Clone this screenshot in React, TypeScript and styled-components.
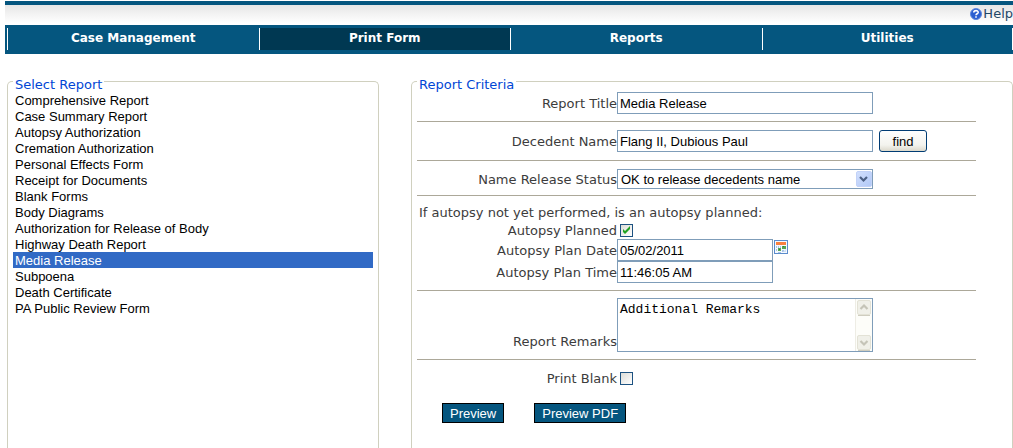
import React, { useState } from "react";
import styled, { createGlobalStyle } from "styled-components";

const verdana = `Verdana, "DejaVu Sans", sans-serif`;
const arial = `"Liberation Sans", Arial, sans-serif`;

const GlobalStyle = createGlobalStyle`
  *, *::before, *::after { box-sizing: border-box; }
  body { margin: 0; background: #fff; color: #3c3c3c; font: 13px/16px ${verdana}; }
`;

const Page = styled.div`
  display: flex;
  flex-direction: column;
  min-height: 100vh;
  padding: 1px 0 0 5px;
`;

const TopBar = styled.header`
  display: flex;
  justify-content: flex-end;
  align-items: center;
  height: 24px;
  border-top: 4px solid #05567f;
  background: linear-gradient(#e6e6e6, #fff 90%);
`;

const HelpLink = styled.a`
  display: flex;
  align-items: center;
  gap: 1px;
  height: 20px;
  padding-bottom: 2px;
  color: #1f4766;
  text-decoration: none;
`;

const Nav = styled.nav`
  display: grid;
  grid-template-columns: repeat(4, 1fr);
  padding: 3px 0 4px 2px;
  background: #05567f;
`;

const NavItem = styled.a<{ $active?: boolean }>`
  height: 22px;
  border-left: 1px solid #fff;
  background: ${(p) => (p.$active ? "#003852" : "transparent")};
  color: #fff;
  font-size: 12px;
  line-height: 20px;
  font-weight: bold;
  text-align: center;
  text-decoration: none;
  &:last-child { border-right: 1px solid #fff; }
`;

const Main = styled.main`
  display: grid;
  grid-template-columns: 372fr 602fr;
  gap: 32px;
  flex: 1;
  padding: 16px 0 0 2px;
`;

const Panel = styled.fieldset`
  min-width: 0;
  margin: 0;
  padding: 0 5px 16px;
  border: 1px solid #d0d0bf;
  border-bottom: 0;
  border-radius: 5px 5px 0 0;
`;

const PanelTitle = styled.legend`
  padding: 8px 2px 0;
  color: #0046d5;
  line-height: 14px;
`;

const ReportList = styled.select`
  display: block;
  width: 100%;
  padding: 0;
  border: 0;
  outline: 0;
  overflow: hidden;
  background: #fff;
  color: #000;
  font: 13px/16px ${arial};
  option {
    height: 16px;
    min-height: 16px;
    padding: 1px 2px 0;
  }
  option:checked {
    background: #316ac5 linear-gradient(#316ac5, #316ac5);
    color: #fff;
  }
`;

const Form = styled.form`
  padding-right: 31px;
`;

const Group = styled.div<{ $top?: number; $bottom?: number }>`
  padding: ${(p) => p.$top ?? 8}px 0 ${(p) => p.$bottom ?? 7}px;
  border-bottom: 1px solid #aca899;
`;

const LastGroup = styled.div`
  padding-top: 9px;
`;

const Row = styled.div<{ $end?: boolean }>`
  display: grid;
  grid-template-columns: 200px 1fr;
  align-items: ${(p) => (p.$end ? "end" : "center")};
`;

const Label = styled.label<{ $tall?: boolean }>`
  padding-top: 2px;
  text-align: right;
  white-space: nowrap;
  line-height: ${(p) => (p.$tall ? 20 : 16)}px;
`;

const Field = styled.div`
  display: flex;
  align-items: center;
`;

const Question = styled.p`
  margin: 0;
  padding-left: 2px;
  line-height: 17px;
`;

const TextInput = styled.input<{ $short?: boolean }>`
  width: ${(p) => (p.$short ? 156 : 256)}px;
  height: 22px;
  padding: 0 2px;
  border: 1px solid #7f9db9;
  background: #fff;
  color: #000;
  font: 13px/16px ${arial};
`;

const FindButton = styled.button`
  width: 48px;
  height: 22px;
  margin-left: 6px;
  padding: 1px 0 0;
  border: 1px solid #003c74;
  border-radius: 3px;
  background: linear-gradient(#fff, #f3f3ee 70%, #dcd9cc);
  color: #000;
  font: 13px/16px ${arial};
`;

const SelectWrap = styled.div`
  display: grid;
  width: 256px;
  > * { grid-area: 1 / 1; }
  > svg { justify-self: end; align-self: center; margin-right: 1px; pointer-events: none; }
`;

const StatusSelect = styled.select`
  appearance: none;
  height: 20px;
  padding: 2px 20px 0 3px;
  border: 1px solid #7f9db9;
  border-radius: 0;
  background: #fff;
  color: #000;
  font: 13px/16px ${arial};
`;

const TickBox = styled.input`
  appearance: none;
  width: 13px;
  height: 13px;
  margin: 0 0 0 3px;
  border: 1px solid #1d5281;
  background: linear-gradient(135deg, #dcdcd7, #fff);
`;

const TickWrap = styled.span`
  display: inline-grid;
  > * { grid-area: 1 / 1; }
  > svg { margin-left: 3px; pointer-events: none; }
`;

const CalendarButton = styled.button`
  display: flex;
  align-self: flex-start;
  margin: 1px 0 0 1px;
  padding: 0;
  border: 0;
  background: none;
`;

const RemarksBox = styled.div`
  display: flex;
  width: 256px;
  height: 54px;
  border: 1px solid #7f9db9;
`;

const Remarks = styled.textarea`
  flex: 1;
  min-width: 0;
  padding: 3px 2px 0;
  border: 0;
  outline: 0;
  resize: none;
  overflow: hidden;
  background: #fff;
  color: #000;
  font: 13px/16px "Liberation Mono", "Courier New", monospace;
`;

const ScrollTrack = styled.div`
  display: flex;
  flex-direction: column;
  justify-content: space-between;
  width: 17px;
  background: #fdfdf9;
  border-left: 1px solid #eeede5;
`;

const Actions = styled.div`
  display: flex;
  gap: 30px;
  padding: 16px 0 0 25px;
`;

const ActionButton = styled.button`
  height: 20px;
  padding: 1px 7px 0;
  border: 1px solid #000;
  background: #05567f;
  color: #fff;
  font: 13px/16px ${arial};
`;

const HelpIcon = () => (
  <svg width="12" height="12" viewBox="0 0 12 12" aria-hidden="true">
    <circle cx="6" cy="6" r="5.5" fill="#2a5fd0" stroke="#5c88de" />
    <path d="M3.8 4.6C3.8 2 8.4 2 8.2 4.4C8 5.8 6 5.7 6 7.2M6 8.2V9.8" fill="none" stroke="#fff" strokeWidth="1.6" />
  </svg>
);

const DropArrow = () => (
  <svg width="16" height="16" viewBox="0 0 16 16" aria-hidden="true">
    <defs>
      <linearGradient id="drop" x1="0" y1="0" x2="1" y2="1">
        <stop offset="0" stopColor="#d3e0fd" />
        <stop offset="1" stopColor="#b0c8f7" />
      </linearGradient>
    </defs>
    <rect x="0.5" y="0.5" width="15" height="15" rx="1.5" fill="url(#drop)" stroke="#c2d2f8" />
    <path d="M4 6L7.5 9.5L11 6" fill="none" stroke="#4d6185" strokeWidth="2.2" />
  </svg>
);

const Tick = () => (
  <svg width="13" height="13" viewBox="0 0 13 13" aria-hidden="true">
    <path d="M3 5V8L5 10L10 5V2L5 7Z" fill="#21a121" />
  </svg>
);

const CalendarIcon = () => (
  <svg width="14" height="14" viewBox="0 0 14 14" aria-hidden="true">
    <rect x="0.5" y="0.5" width="13" height="13" fill="#f4f9ff" stroke="#5b8ccc" />
    <path d="M2 2H12V5H2Z" fill="#f9803f" />
    <path d="M2 6H3V8H2ZM4 6H5V8H4ZM6 6H7V8H6ZM2 9H3V11H2ZM8 10H10V12H8ZM4 12H7V13H4Z" fill="#a9c3e6" />
    <path d="M8 6H12V9H8ZM4 8H7V11H4Z" fill="#58a552" />
    <path d="M9 6H10V7H9ZM5 9H6V10H5Z" fill="#2f8531" />
    <path d="M9 12L12 9V12Z" fill="#cfe0f5" />
  </svg>
);

const ScrollArrow = ({ down }: { down?: boolean }) => (
  <svg width="16" height="17" viewBox="0 0 16 17" aria-hidden="true">
    <rect x="1.5" y="1.5" width="13" height="14" rx="1.5" fill="#f0f0e9" stroke="#e3e2d6" />
    <path d="M2 16.5H14" stroke="#cfcdbf" />
    <path d={down ? "M4.5 7L8 10.5L11.5 7" : "M4.5 10L8 6.5L11.5 10"} fill="none" stroke="#c5c4b8" strokeWidth="2.2" />
  </svg>
);

const reports = [
  "Comprehensive Report",
  "Case Summary Report",
  "Autopsy Authorization",
  "Cremation Authorization",
  "Personal Effects Form",
  "Receipt for Documents",
  "Blank Forms",
  "Body Diagrams",
  "Authorization for Release of Body",
  "Highway Death Report",
  "Media Release",
  "Subpoena",
  "Death Certificate",
  "PA Public Review Form",
];

const tabs = ["Case Management", "Print Form", "Reports", "Utilities"];

function CheckField({ id, label, initial }: { id: string; label: string; initial: boolean }) {
  const [checked, setChecked] = useState(initial);
  return (
    <Row>
      <Label htmlFor={id}>{label}</Label>
      <Field>
        <TickWrap>
          <TickBox id={id} type="checkbox" checked={checked} onChange={(e) => setChecked(e.target.checked)} />
          {checked && <Tick />}
        </TickWrap>
      </Field>
    </Row>
  );
}

export default function App() {
  return (
    <>
      <GlobalStyle />
      <Page>
        <TopBar>
          <HelpLink href="#help">
            <HelpIcon />
            Help
          </HelpLink>
        </TopBar>
        <Nav>
          {tabs.map((tab) => (
            <NavItem key={tab} href="#" $active={tab === "Print Form"}>
              {tab}
            </NavItem>
          ))}
        </Nav>
        <Main>
          <Panel>
            <PanelTitle>Select Report</PanelTitle>
            <ReportList size={reports.length} defaultValue="Media Release" aria-label="Select Report">
              {reports.map((report) => (
                <option key={report}>{report}</option>
              ))}
            </ReportList>
          </Panel>
          <Panel>
            <PanelTitle>Report Criteria</PanelTitle>
            <Form onSubmit={(e) => e.preventDefault()}>
              <Group $top={0}>
                <Row>
                  <Label htmlFor="title">Report Title</Label>
                  <Field>
                    <TextInput id="title" defaultValue="Media Release" />
                  </Field>
                </Row>
              </Group>
              <Group $bottom={8}>
                <Row>
                  <Label htmlFor="decedent">Decedent Name</Label>
                  <Field>
                    <TextInput id="decedent" defaultValue="Flang II, Dubious Paul" />
                    <FindButton type="button">find</FindButton>
                  </Field>
                </Row>
              </Group>
              <Group $bottom={6}>
                <Row>
                  <Label htmlFor="status">Name Release Status</Label>
                  <SelectWrap>
                    <StatusSelect id="status">
                      <option>OK to release decedents name</option>
                    </StatusSelect>
                    <DropArrow />
                  </SelectWrap>
                </Row>
              </Group>
              <Group>
                <Question>If autopsy not yet performed, is an autopsy planned:</Question>
                <CheckField id="planned" label="Autopsy Planned" initial />
                <Row>
                  <Label htmlFor="date">Autopsy Plan Date</Label>
                  <Field>
                    <TextInput id="date" $short defaultValue="05/02/2011" />
                    <CalendarButton type="button" aria-label="Choose date">
                      <CalendarIcon />
                    </CalendarButton>
                  </Field>
                </Row>
                <Row>
                  <Label htmlFor="time">Autopsy Plan Time</Label>
                  <Field>
                    <TextInput id="time" $short defaultValue="11:46:05 AM" />
                  </Field>
                </Row>
              </Group>
              <Group $top={7}>
                <Row $end>
                  <Label htmlFor="remarks" $tall>
                    Report Remarks
                  </Label>
                  <RemarksBox>
                    <Remarks id="remarks" defaultValue="Additional Remarks" />
                    <ScrollTrack>
                      <ScrollArrow />
                      <ScrollArrow down />
                    </ScrollTrack>
                  </RemarksBox>
                </Row>
              </Group>
              <LastGroup>
                <CheckField id="blank" label="Print Blank" initial={false} />
                <Actions>
                  <ActionButton type="submit">Preview</ActionButton>
                  <ActionButton type="button">Preview PDF</ActionButton>
                </Actions>
              </LastGroup>
            </Form>
          </Panel>
        </Main>
      </Page>
    </>
  );
}
